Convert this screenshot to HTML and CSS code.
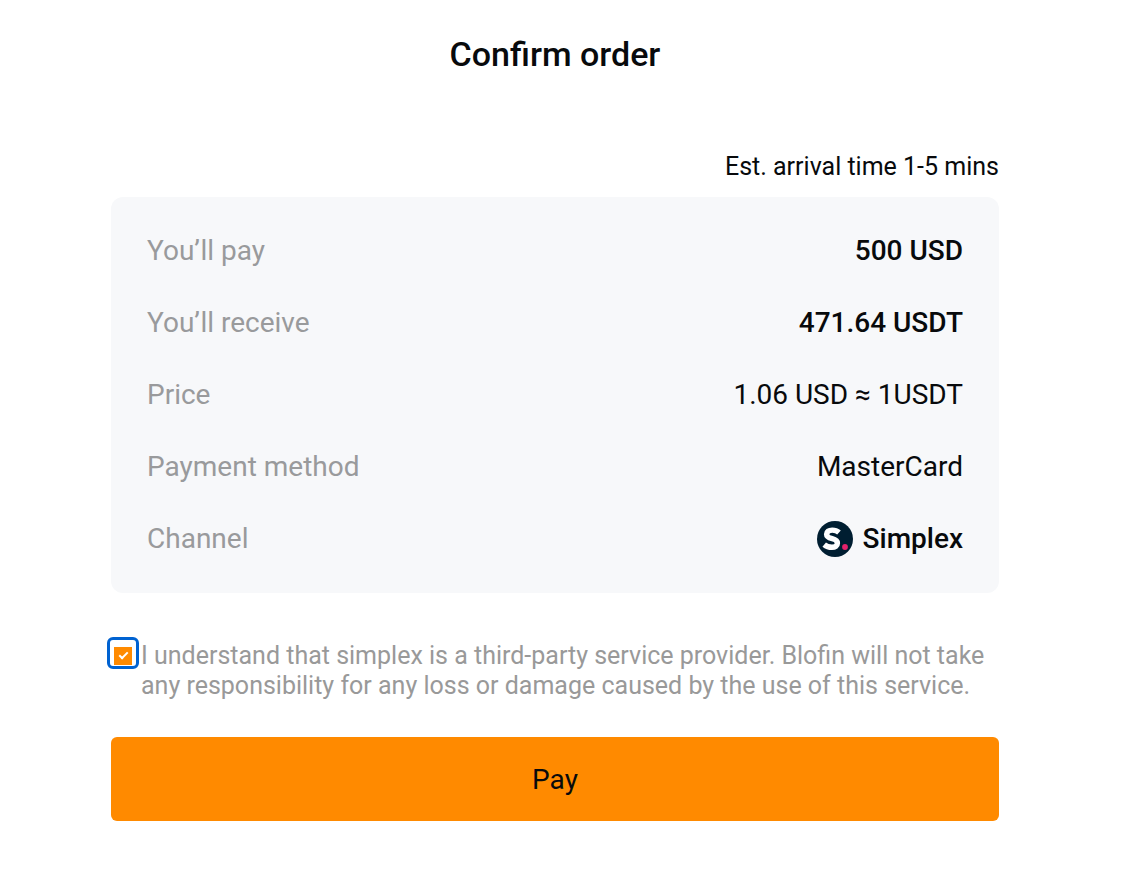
FILE: index.html
```
<!DOCTYPE html>
<html lang="en">
  <head>
    <meta charset="UTF-8" />
    <meta name="viewport" content="width=device-width, initial-scale=1.0" />
    <title>Confirm order</title>
    <link rel="stylesheet" href="styles.css" />
  </head>
  <body>
    <main class="container">
      <h1 class="title">Confirm order</h1>
      <p class="arrival">Est. arrival time 1-5 mins</p>
      <dl class="details">
        <div class="row">
          <dt>You’ll pay</dt>
          <dd class="strong">500 USD</dd>
        </div>
        <div class="row">
          <dt>You’ll receive</dt>
          <dd class="strong">471.64 USDT</dd>
        </div>
        <div class="row">
          <dt>Price</dt>
          <dd>1.06 USD ≈ 1USDT</dd>
        </div>
        <div class="row">
          <dt>Payment method</dt>
          <dd>MasterCard</dd>
        </div>
        <div class="row">
          <dt>Channel</dt>
          <dd class="strong channel">
            <svg class="logo" viewBox="0 0 36 36" aria-hidden="true">
              <circle cx="18" cy="18" r="18" fill="#001e31" />
              <path
                d="M22 11.4C20.2 9.8 17.8 9.1 15.2 9.1C11.7 9.1 9.6 10.7 9.6 13.3C9.6 16 11.4 16.8 15.2 17.7C18.8 18.6 20.4 19.6 20.4 22.2C20.4 24.9 18.2 26.3 14.9 26.3C11.8 26.3 9.3 25.4 7.2 23.6"
                fill="none"
                stroke="#fff"
                stroke-width="5.4"
              />
              <circle cx="28" cy="26" r="2.9" fill="#e5226b" />
            </svg>
            Simplex
          </dd>
        </div>
      </dl>
      <div class="terms">
        <input type="checkbox" id="agree" name="agree" checked />
        <label for="agree">
          I understand that simplex is a third-party service provider. Blofin
          will not take any responsibility for any loss or damage caused by the
          use of this service.
        </label>
      </div>
      <button type="button" class="pay">Pay</button>
    </main>
  </body>
</html>
```
FILE: styles.css
```
* {
  box-sizing: border-box;
}

body {
  margin: 0;
  background: #fff;
  color: #080a0c;
  font-family: Roboto, "Liberation Sans", sans-serif;
}

.container {
  padding: 34px 149px 64px 111px;
}

.title {
  margin: 0;
  font-size: 34px;
  line-height: 40px;
  font-weight: 500;
  text-align: center;
}

.arrival {
  margin: 78px 0 0;
  padding-bottom: 15px;
  font-size: 25px;
  line-height: 30px;
  text-align: right;
}

.details {
  margin: 0;
  padding: 18px 36px;
  border-radius: 12px;
  background: #f7f8fa;
  font-size: 28px;
  line-height: 36px;
}

.row {
  display: flex;
  justify-content: space-between;
  align-items: center;
  height: 72px;
}

.row dt {
  color: #999a9c;
}

.row dd {
  margin: 0;
}

.row .strong {
  font-weight: 500;
}

.channel {
  display: flex;
  align-items: center;
  gap: 10px;
}

.logo {
  width: 36px;
  height: 36px;
}

.terms {
  display: flex;
  align-items: flex-start;
  gap: 2px;
  margin: 48px 0 36px;
  color: #999;
  font-size: 25px;
  line-height: 30px;
}

.terms input {
  appearance: none;
  position: relative;
  flex: none;
  width: 32px;
  height: 32px;
  margin: -4px 0 0 -4px;
  border: 3px solid #0062d1;
  border-radius: 6px;
  background: #fff;
}

.terms input:checked::before {
  content: "";
  position: absolute;
  left: 4px;
  top: 7px;
  width: 18px;
  height: 18px;
  background: #ff8a00;
}

/* tick */
.terms input:checked::after {
  content: "";
  position: absolute;
  left: 11px;
  top: 10px;
  box-sizing: border-box;
  width: 5px;
  height: 9px;
  border: solid #fff;
  border-width: 0 2px 2px 0;
  transform: rotate(45deg);
}

.pay {
  display: block;
  width: 100%;
  height: 84px;
  border: 0;
  border-radius: 6px;
  background: #ff8a00;
  color: #080a0c;
  font-family: inherit;
  font-size: 28px;
}
```
